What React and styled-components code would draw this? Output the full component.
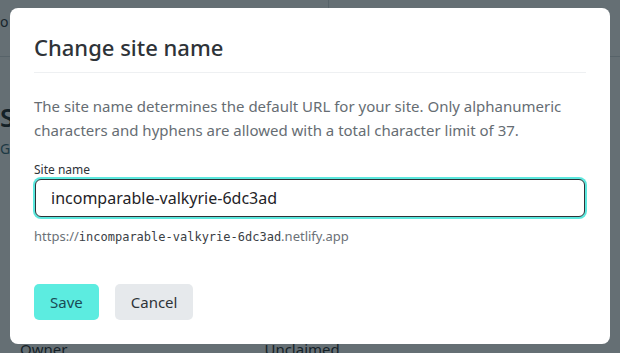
import React from 'react';
import styled, { createGlobalStyle } from 'styled-components';

const GlobalStyle = createGlobalStyle`
  html, body {
    margin: 0;
    padding: 0;
    background: #ffffff;
  }
  body {
    font-family: "Noto Sans", "Open Sans", sans-serif;
    color: #2e3338;
  }
`

const Page = styled.div`
  width: 620px;
  height: 353px;
  overflow: hidden;
  display: flex;
  flex-direction: column;
  background: #ffffff;
`
const TopBar = styled.div`
  height: 56px;
  display: flex;
  border-bottom: 1px solid #d8dde1;
`
const TopLeft = styled.div`
  width: 328px;
  border-right: 1px solid #d8dde1;
  font-size: 14px;
  padding-top: 12px;
  color: #2e3338;
`
const PageBody = styled.div`
  flex: 1;
  padding-top: 44px;
  display: flex;
  flex-direction: column;
`
const PageHeading = styled.div`
  font-size: 26px;
  line-height: 32px;
  font-weight: 600;
  color: #1f272c;
`
const PageSub = styled.div`
  font-size: 14px;
  color: #3c6b7a;
  margin-top: 6px;
`
const PageFooter = styled.div`
  margin-top: auto;
  display: flex;
  padding-left: 20px;
  gap: 197px;
  font-size: 15px;
  line-height: 18px;
  color: #1f272c;
  margin-bottom: -5px;
`

const Overlay = styled.div`
  position: fixed;
  inset: 0;
  background: rgba(14, 30, 37, 0.64);
  display: flex;
  align-items: flex-start;
  justify-content: center;
  padding-top: 8px;
`
const Modal = styled.div`
  width: 600px;
  height: 336px;
  box-sizing: border-box;
  background: #ffffff;
  border-radius: 8px;
  padding: 24px 24px 0;
  display: flex;
  flex-direction: column;
`
const Title = styled.h2`
  margin: 0;
  font-size: 22px;
  line-height: 30px;
  font-weight: 500;
  color: #2e3338;
  padding-bottom: 10px;
  border-bottom: 1px solid #eef0f2;
`
const Description = styled.p`
  margin: 21px 0 0;
  font-size: 15px;
  line-height: 24px;
  color: #666d73;
`
const Field = styled.div`
  margin-top: 20px;
  display: flex;
  flex-direction: column;
`
const Label = styled.label`
  font-size: 12px;
  line-height: 16px;
  color: #2e3338;
  margin-bottom: 1px;
`
const Input = styled.input`
  height: 38px;
  box-sizing: border-box;
  border: 1px solid #2e3338;
  border-radius: 6px;
  box-shadow: 0 0 0 2px #5ce8de;
  padding: 0 15px;
  font-family: inherit;
  font-size: 16px;
  color: #1f2327;
  caret-color: #1f2327;
  outline: none;
  margin: 0 1px;
`
const Hint = styled.div`
  margin-top: 10px;
  font-size: 13px;
  line-height: 18px;
  color: #6b7177;
`
const Mono = styled.span`
  font-family: "DejaVu Sans Mono", "Liberation Mono", monospace;
  font-size: 12px;
  color: #3a4045;
`
const Actions = styled.div`
  margin-top: 38px;
  display: flex;
  gap: 16px;
`
const Button = styled.button`
  height: 36px;
  padding: 0 16px;
  border: none;
  border-radius: 5px;
  font-family: inherit;
  font-size: 15px;
  cursor: pointer;
  background: ${(props) => (props.$primary ? '#5cece0' : '#e6e9ec')};
  color: ${(props) => (props.$primary ? '#1a4a55' : '#2e3338')};
`

const App = () => {
  return (
    <>
      <GlobalStyle />
      <Page>
        <TopBar>
          <TopLeft>o</TopLeft>
        </TopBar>
        <PageBody>
          <PageHeading>S</PageHeading>
          <PageSub>G</PageSub>
          <PageFooter>
            <span>Owner</span>
            <span>Unclaimed</span>
          </PageFooter>
        </PageBody>
      </Page>
      <Overlay>
        <Modal>
          <Title>Change site name</Title>
          <Description>
            The site name determines the default URL for your site. Only alphanumeric
            characters and hyphens are allowed with a total character limit of 37.
          </Description>
          <Field>
            <Label htmlFor="site-name">Site name</Label>
            <Input id="site-name" defaultValue="incomparable-valkyrie-6dc3ad" />
            <Hint>
              https://<Mono>incomparable-valkyrie-6dc3ad</Mono>.netlify.app
            </Hint>
          </Field>
          <Actions>
            <Button $primary>Save</Button>
            <Button>Cancel</Button>
          </Actions>
        </Modal>
      </Overlay>
    </>
  );
};

export default App;
